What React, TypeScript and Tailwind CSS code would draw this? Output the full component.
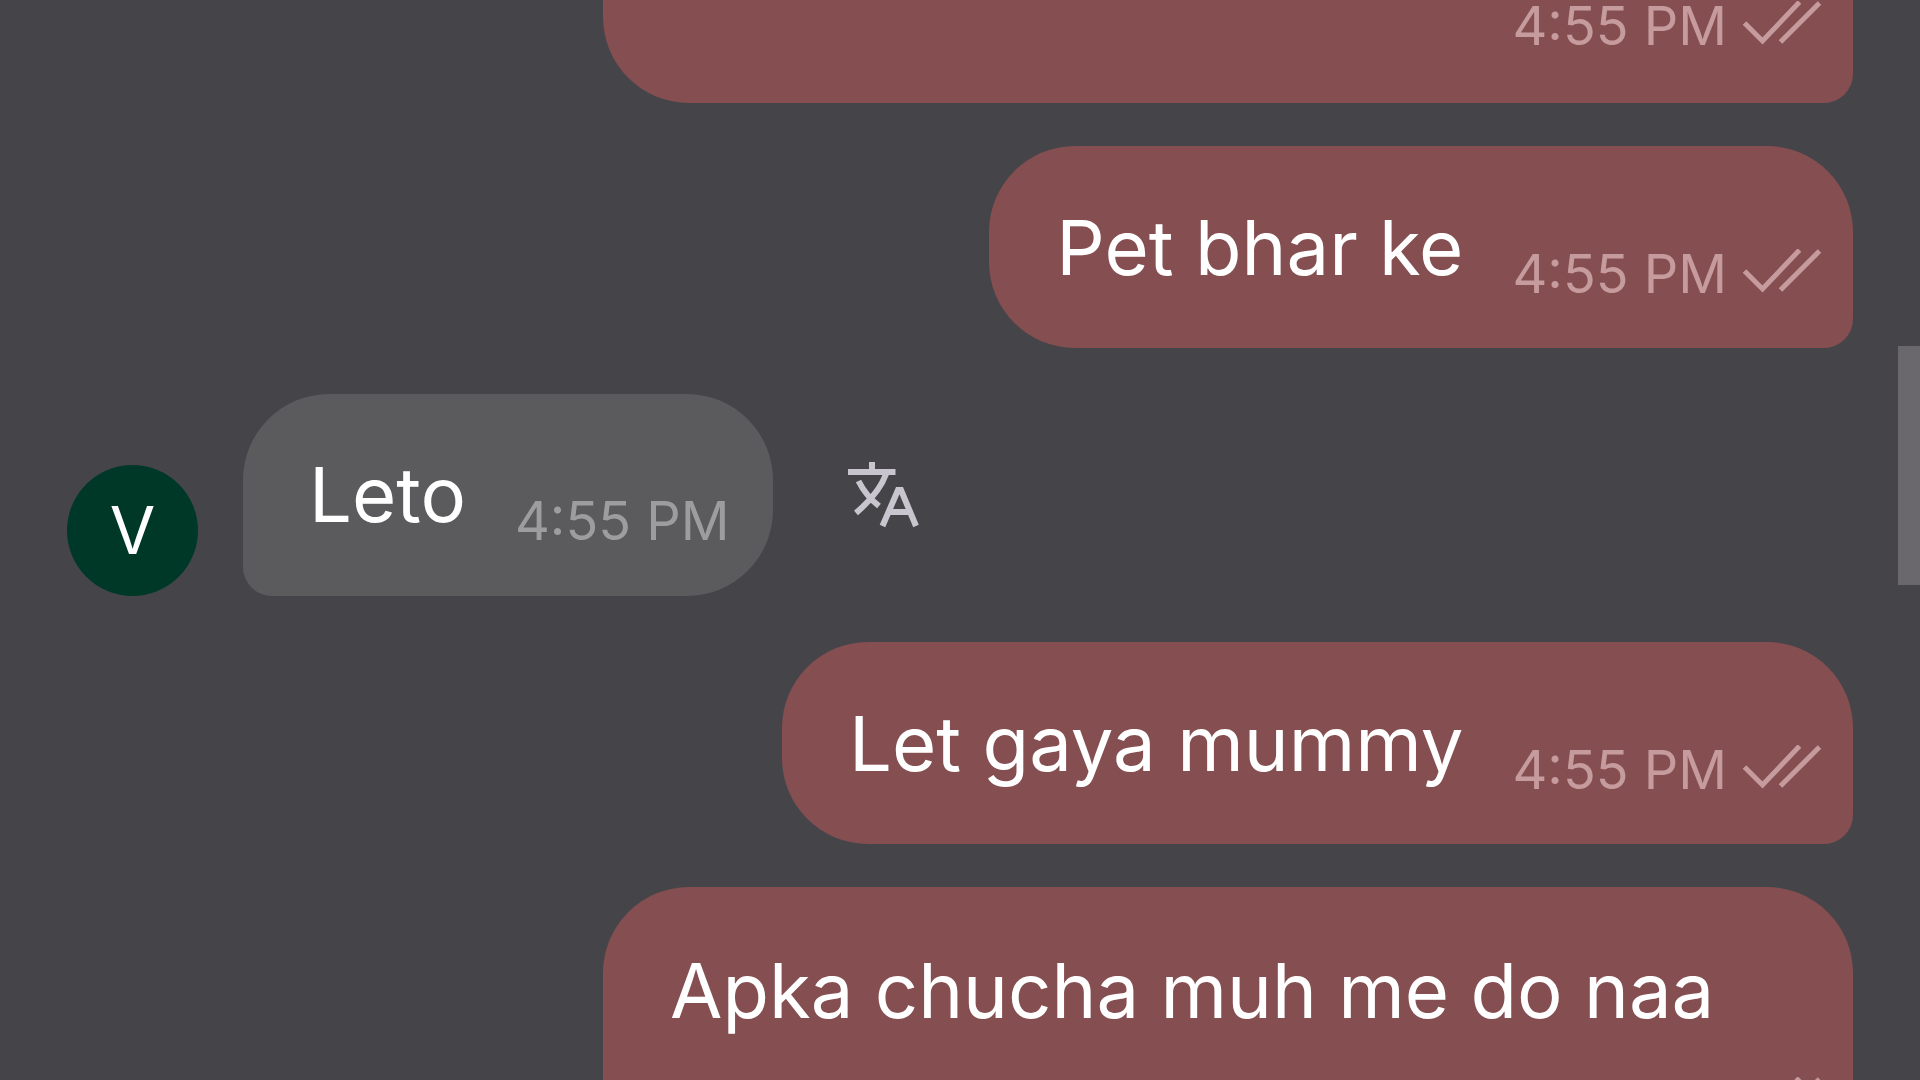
import type { ReactNode } from 'react';

function Ticks() {
  return (
    <svg className="mb-1.5 h-11 w-20 shrink-0" viewBox="0 0 80 44" fill="none" stroke="currentColor" strokeWidth="5" role="img" aria-label="Read">
      <path d="M2.500 22 20.500 40 57.500 1" />
      <path d="M38.500 41 77.500 2" />
    </svg>
  );
}

function Stamp({ children, ticks = false }: { children: ReactNode; ticks?: boolean }) {
  return (
    <div className="flex shrink-0 items-center gap-[15px] text-[54px] leading-[52px]">
      <time>{children}</time>
      {ticks && <Ticks />}
    </div>
  );
}

function Sent({ text }: { text: string }) {
  return (
    <article className="flex items-end gap-[49px] self-end rounded-[86px] rounded-br-[29px] bg-[#854e51] pt-[57px] pr-[31px] pb-[56px] pl-[67px]">
      <p className="text-[76px] leading-[89px] text-white">{text}</p>
      <div className="-mb-2 text-[#c69b9d]">
        <Stamp ticks>4:55 PM</Stamp>
      </div>
    </article>
  );
}

function TranslateIcon() {
  return (
    <svg className="h-[66px] w-[72px] overflow-visible" viewBox="0 0 72 66" fill="none" stroke="currentColor" strokeWidth="6" aria-hidden="true">
      <path d="M0 10H47.500M24 0V10M38 12C33 26 23 38 8 51M10.500 19C15 28 22 37 31 44" />
      <path d="M34.500 64 50 28H53L68 64M41 50H62" />
    </svg>
  );
}

export default function App() {
  return (
    <div className="flex h-screen overflow-hidden bg-[#454549] font-['Inter',sans-serif]">
      <main className="flex min-w-0 flex-1 flex-col pr-[45px] pl-[67px]">
        <article className="flex w-[1250px] max-w-full shrink-0 justify-end self-end rounded-b-[86px] rounded-br-[29px] bg-[#854e51] pr-[31px] pb-[51px] text-[#c69b9d]">
          <Stamp ticks>4:55 PM</Stamp>
        </article>

        <div className="mt-[43px] flex shrink-0 flex-col">
          <Sent text="Pet bhar ke" />
        </div>

        <div className="mt-[46px] flex shrink-0 items-end">
          <div className="flex size-[131px] items-center justify-center rounded-full bg-[#003828] text-[66px] text-white">V</div>
          <article className="ml-[45px] flex items-end gap-[49px] rounded-[86px] rounded-bl-[29px] bg-[#5b5b5d] pt-[56px] pr-[43px] pb-[57px] pl-[66px]">
            <p className="text-[76px] leading-[89px] text-white">Leto</p>
            <div className="-mb-2 text-[#9d9d9f]">
              <Stamp>4:55 PM</Stamp>
            </div>
          </article>
          <button type="button" aria-label="Translate" className="ml-[75px] self-center text-[#c9c5ce]">
            <TranslateIcon />
          </button>
        </div>

        <div className="mt-[46px] flex shrink-0 flex-col">
          <Sent text="Let gaya mummy" />
        </div>

        <article className="mt-[43px] flex w-[1250px] max-w-full shrink-0 flex-col self-end rounded-[86px] rounded-br-[29px] bg-[#854e51] pt-[59px] pr-[31px] pb-[53px] pl-[67px]">
          <p className="text-[76px] leading-[89px] text-white">Apka chucha muh me do naa</p>
          <div className="self-end pt-[42px] text-[#c69b9d]">
            <Ticks />
          </div>
        </article>
      </main>
      <div className="w-[22px] shrink-0 pt-[346px]">
        <div className="h-[239px] bg-[#6a686d]" />
      </div>
    </div>
  );
}
